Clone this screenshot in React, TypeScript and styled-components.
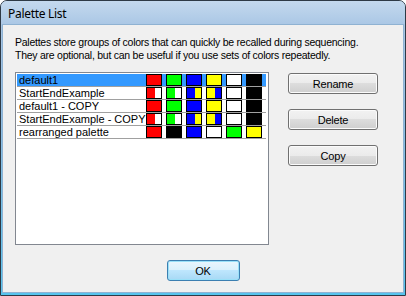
import React from "react";
import styled, { createGlobalStyle, css } from "styled-components";

const Global = createGlobalStyle`
  html, body { margin: 0; padding: 0; background: #ffffff; }
  #root { width: 406px; height: 296px; }
`;

const Window = styled.div`
  box-sizing: border-box;
  width: 406px;
  height: 296px;
  border: 1px solid #2e3a46;
  border-radius: 7px 7px 0 0;
  background: linear-gradient(
    to bottom,
    #c2d8ee 0px,
    #a9c6e4 24px,
    #8fbde3 40%,
    #56c4ee 100%
  );
  display: flex;
  flex-direction: column;
  overflow: hidden;
`;

const TitleBar = styled.div`
  height: 24px;
  display: flex;
  align-items: center;
  padding-left: 7px;
  padding-top: 1px;
  box-sizing: border-box;
  font-family: "Noto Sans", "Open Sans", sans-serif;
  font-size: 12px;
  letter-spacing: -0.3px;
  color: #000;
  background: linear-gradient(to bottom, #c4d9ee, #aac7e5);
`;

const Client = styled.div`
  flex: 1;
  margin: 0 2px 3px 2px;
  background: #f0f0f0;
  box-shadow: 0 0 0 1px #8fb2d2;
  padding: 11px 12px 0 12px;
  display: flex;
  flex-direction: column;
  font-family: "Liberation Sans", Arial, sans-serif;
  font-size: 11px;
  color: #000;
`;

const Description = styled.p`
  margin: 0;
  font-size: 10.5px;
  letter-spacing: -0.25px;
  line-height: 13px;
  height: 26px;
  white-space: nowrap;
`;

const MainRow = styled.div`
  display: flex;
  margin-top: 10px;
`;

const ListBox = styled.div`
  box-sizing: border-box;
  width: 254px;
  height: 173px;
  border: 1px solid #828790;
  background: #fff;
  padding: 1px;
`;

const Row = styled.div<{ $selected?: boolean }>`
  display: flex;
  align-items: flex-start;
  height: 12px;
  width: 249px;
  border-bottom: 1px solid #a0a0a0;
  background: ${(p) => (p.$selected ? "#3399ff" : "transparent")};
`;

const RowName = styled.div`
  width: 127px;
  flex: none;
  padding-left: 2px;
  line-height: 12px;
  white-space: nowrap;
  overflow: visible;
  position: relative;
  z-index: 0;
`;

const Swatches = styled.div`
  display: flex;
  gap: 4px;
  position: relative;
  z-index: 1;
`;

const Swatch = styled.div<{ $a: string; $b?: string }>`
  box-sizing: border-box;
  width: 16px;
  height: 12px;
  border: 1px solid #000;
  ${(p) =>
    p.$b
      ? css`
          background: linear-gradient(
            to right,
            ${p.$a} 0,
            ${p.$a} 8px,
            ${p.$b} 8px,
            ${p.$b} 100%
          );
        `
      : css`
          background: ${p.$a};
        `}
`;

const ButtonColumn = styled.div`
  display: flex;
  flex-direction: column;
  gap: 15px;
  margin-left: 19px;
  padding-top: 1px;
`;

const Button = styled.button<{ $default?: boolean }>`
  box-sizing: border-box;
  width: 90px;
  height: 21px;
  padding: 0;
  border-radius: 3px;
  font-family: "Liberation Sans", Arial, sans-serif;
  font-size: 11px;
  letter-spacing: -0.2px;
  color: #000;
  cursor: default;
  border: 1px solid #707070;
  box-shadow: inset 0 0 0 1px #fbfbfb;
  background: linear-gradient(
    to bottom,
    #f2f2f2 0%,
    #ebebeb 50%,
    #dddddd 50%,
    #cfcfcf 100%
  );
  ${(p) =>
    p.$default &&
    css`
      width: 73px;
      border-color: #3c7fb1;
      box-shadow: inset 0 0 0 1px #9ae0f8;
      background: linear-gradient(
        to bottom,
        #eaf6fd 0%,
        #d9f0fc 50%,
        #bee6fd 50%,
        #a7d9f5 100%
      );
    `}
`;

const Footer = styled.div`
  display: flex;
  justify-content: center;
  margin-top: 15px;
  margin-left: -12px;
  margin-right: -12px;
`;

const R = "#ff0000";
const G = "#00ff00";
const B = "#0000ff";
const Y = "#ffff00";
const W = "#ffffff";
const K = "#000000";

type Sw = [string] | [string, string];

const base: Sw[] = [[R], [G], [B], [Y], [W], [K]];
const startEnd: Sw[] = [[R, W], [G, W], [B, Y], [Y, B], [W], [K]];

const palettes: { name: string; selected?: boolean; swatches: Sw[] }[] = [
  { name: "default1", selected: true, swatches: base },
  { name: "StartEndExample", swatches: startEnd },
  { name: "default1 - COPY", swatches: base },
  { name: "StartEndExample - COPY", swatches: startEnd },
  { name: "rearranged palette", swatches: [[R], [K], [B], [W], [G], [Y]] },
];

export default function App() {
  return (
    <>
      <Global />
      <Window>
        <TitleBar>Palette List</TitleBar>
        <Client>
          <Description>
            Palettes store groups of colors that can quickly be recalled during sequencing.
            <br />
            They are optional, but can be useful if you use sets of colors repeatedly.
          </Description>
          <MainRow>
            <ListBox>
              {palettes.map((p) => (
                <Row key={p.name} $selected={p.selected}>
                  <RowName>{p.name}</RowName>
                  <Swatches>
                    {p.swatches.map((s, i) => (
                      <Swatch key={i} $a={s[0]} $b={s[1]} />
                    ))}
                  </Swatches>
                </Row>
              ))}
            </ListBox>
            <ButtonColumn>
              <Button>Rename</Button>
              <Button>Delete</Button>
              <Button>Copy</Button>
            </ButtonColumn>
          </MainRow>
          <Footer>
            <Button $default>OK</Button>
          </Footer>
        </Client>
      </Window>
    </>
  );
}
